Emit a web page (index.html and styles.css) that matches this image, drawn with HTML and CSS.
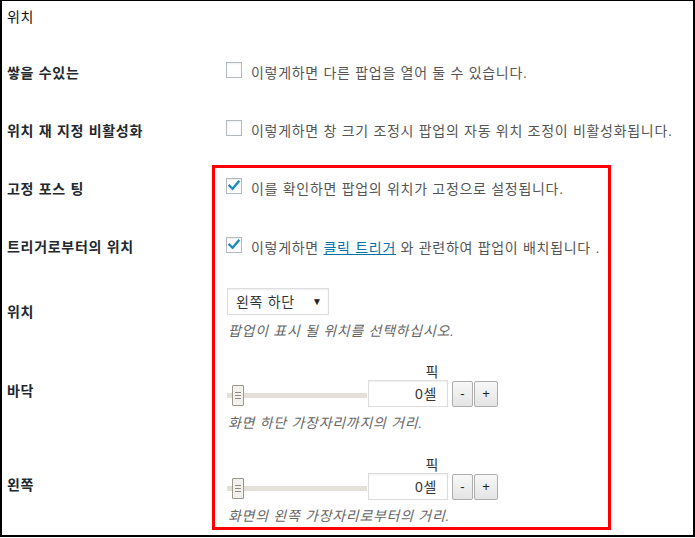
FILE: index.html
```html
<!DOCTYPE html>
<html lang="ko">
    <head>
        <meta charset="UTF-8" />
        <meta name="viewport" content="width=device-width, initial-scale=1.0" />
        <title>위치</title>
        <link rel="stylesheet" href="styles.css">
    </head>
    <body>
        <div class="frame">
            <!-- 섹션 제목 -->
            <h2 class="title">위치</h2>

            <div class="row r-check">
                <div class="label">쌓을 수있는</div>
                <div class="field">
                    <label class="check"><span class="cbox"></span><span class="ctext">이렇게하면 다른 팝업을 열어 둘 수 있습니다.</span></label>
                </div>
            </div>

            <div class="row r-check">
                <div class="label">위치 재 지정 비활성화</div>
                <div class="field">
                    <label class="check"><span class="cbox"></span><span class="ctext">이렇게하면 창 크기 조정시 팝업의 자동 위치 조정이 비활성화됩니다.</span></label>
                </div>
            </div>

            <div class="row r-check">
                <div class="label">고정 포스 팅</div>
                <div class="field">
                    <label class="check"><span class="cbox on">
                        <svg viewBox="0 0 16 16" width="16" height="16"><path d="M3.5 7.8 L6.6 10.8 L12.6 3.6" fill="none" stroke="#1e8cbe" stroke-width="2.4" stroke-linecap="square"/></svg>
                    </span><span class="ctext">이를 확인하면 팝업의 위치가 고정으로 설정됩니다.</span></label>
                </div>
            </div>

            <div class="row r-check r-trigger">
                <div class="label">트리거로부터의 위치</div>
                <div class="field">
                    <label class="check"><span class="cbox on">
                        <svg viewBox="0 0 16 16" width="16" height="16"><path d="M3.5 7.8 L6.6 10.8 L12.6 3.6" fill="none" stroke="#1e8cbe" stroke-width="2.4" stroke-linecap="square"/></svg>
                    </span><span class="ctext">이렇게하면 <a href="#" class="link">클릭 트리거</a> 와 관련하여 팝업이 배치됩니다 .</span></label>
                </div>
            </div>

            <div class="row r-select">
                <div class="label">위치</div>
                <div class="field">
                    <div class="select">왼쪽 하단<span class="arrow">▼</span></div>
                    <p class="desc">팝업이 표시 될 위치를 선택하십시오.</p>
                </div>
            </div>

            <div class="row r-range r-bottom">
                <div class="label">바닥</div>
                <div class="field">
                    <div class="range">
                        <div class="slider"><span class="track"></span><span class="handle"><i></i><i></i><i></i></span></div>
                        <div class="num">
                            <div class="unit">픽</div>
                            <div class="numbox">0셀</div>
                        </div>
                        <div class="btns"><span class="btn">-</span><span class="btn plus">+</span></div>
                    </div>
                    <p class="desc">화면 하단 가장자리까지의 거리.</p>
                </div>
            </div>

            <div class="row r-range r-left">
                <div class="label">왼쪽</div>
                <div class="field">
                    <div class="range">
                        <div class="slider"><span class="track"></span><span class="handle"><i></i><i></i><i></i></span></div>
                        <div class="num">
                            <div class="unit">픽</div>
                            <div class="numbox">0셀</div>
                        </div>
                        <div class="btns"><span class="btn">-</span><span class="btn plus">+</span></div>
                    </div>
                    <p class="desc">화면의 왼쪽 가장자리로부터의 거리.</p>
                </div>
            </div>

            <!-- 강조 표시 박스 -->
            <div class="mark"></div>
        </div>
    </body>
</html>
```

FILE: styles.css
```css
html,
body {
    margin: 0px;
    padding: 0px;
    background: #fff;
}

body {
    font-family: "Liberation Sans", "Noto Sans CJK KR", sans-serif;
    font-size: 14px;
    line-height: 18px;
    letter-spacing: 0.7px;
    color: #23282d;
}

/* 바깥 테두리 */
.frame {
    position: relative;
    box-sizing: border-box;
    width: 695px;
    height: 537px;
    border: 2px solid #000;
    border-top-width: 1px;
    overflow: hidden;
}

.title {
    margin: 0px;
    height: 43px;
    box-sizing: border-box;
    padding: 7px 0 0 5px;
    font-size: 14px;
    font-weight: 400;
    line-height: 18px;
    color: #111;
}

/* 한줄 = 라벨 + 필드 */
.row {
    display: flex;
    align-items: flex-start;
}
.label {
    flex-shrink: 0;
    width: 224px;
    box-sizing: border-box;
    padding: 20px 0 0 5px;
    font-weight: 600;
    color: #23282d;
}
.field {
    flex: 1;
}

/* 체크박스 줄 */
.r-check {
    height: 58px;
}
.r-trigger {
    height: 65px;
}
.r-check .field {
    padding-top: 18px;
}
.check {
    display: flex;
    align-items: flex-start;
    white-space: nowrap;
    color: #555;
}
.cbox {
    flex-shrink: 0;
    display: block;
    box-sizing: border-box;
    width: 16px;
    height: 16px;
    margin-right: 9px;
    border: 1px solid #b4b9be;
    background: #fff;
    box-shadow: inset 0 1px 2px rgba(0, 0, 0, 0.07);
    position: relative;
}
.cbox svg {
    position: absolute;
    top: -1px;
    left: -1px;
}
.ctext {
    padding-top: 2px;
}
.r-trigger .cbox {
    margin-top: 1px;
}
.r-trigger .ctext {
    padding-top: 3px;
}
.link {
    color: #0073aa;
    text-decoration: underline;
}

/* 셀렉트 */
.r-select {
    height: 79px;
}
.r-select .field {
    padding-top: 5px;
}
.select {
    box-sizing: border-box;
    width: 102px;
    height: 27px;
    margin-left: 1px;
    padding: 4px 0 0 8px;
    border: 1px solid #ddd;
    box-shadow: inset 0 1px 2px rgba(0, 0, 0, 0.07);
    color: #32373c;
    position: relative;
}
.arrow {
    position: absolute;
    right: 6px;
    top: 4px;
    font-size: 10px;
    letter-spacing: 0;
    color: #222;
}

.desc {
    margin: 7px 0 0 2px;
    font-style: italic;
    color: #666;
}

/* 슬라이더 줄 */
.r-bottom {
    height: 94px;
}
.r-bottom .field {
    padding-top: 2px;
}
.r-left .field {
    padding-top: 1px;
}
.range {
    display: flex;
    align-items: flex-end;
    margin-left: 1px;
}
.slider {
    position: relative;
    width: 140px;
    height: 27px;
    margin-right: 1px;
}
.track {
    position: absolute;
    left: 0;
    top: 13px;
    width: 100%;
    height: 5px;
    background: #e3e0da;
}
.handle {
    position: absolute;
    left: 5px;
    top: 5px;
    box-sizing: border-box;
    width: 12px;
    height: 21px;
    border: 1px solid #9c978f;
    border-radius: 1px;
    background: #f3f1ee;
    display: flex;
    flex-direction: column;
    align-items: center;
    justify-content: center;
    gap: 2px;
}
.handle i {
    display: block;
    width: 6px;
    height: 1px;
    background: #8d8880;
}

.num {
    width: 80px;
    display: flex;
    flex-direction: column;
}
.unit {
    height: 16px;
    line-height: 16px;
    text-align: right;
    padding-right: 9px;
    color: #333;
}
.numbox {
    box-sizing: border-box;
    height: 27px;
    padding: 4px 10px 0 0;
    text-align: right;
    border: 1px solid #ddd;
    box-shadow: inset 0 1px 2px rgba(0, 0, 0, 0.07);
    color: #32373c;
}

.btns {
    display: flex;
    gap: 1px;
    margin-left: 4px;
    margin-bottom: 0px;
}
.btn {
    box-sizing: border-box;
    width: 21px;
    height: 26px;
    line-height: 23px;
    text-align: center;
    letter-spacing: 0;
    border: 1px solid #adadad;
    border-radius: 2px;
    background: linear-gradient(#f8f8f8, #e4e4e4);
    color: #222;
    font-size: 13px;
}
.btn.plus {
    width: 24px;
}

/* 빨간 강조 박스 */
.mark {
    position: absolute;
    left: 210px;
    top: 164px;
    width: 399px;
    height: 365px;
    box-sizing: border-box;
    border: 3px solid #f00;
    pointer-events: none;
}
```
